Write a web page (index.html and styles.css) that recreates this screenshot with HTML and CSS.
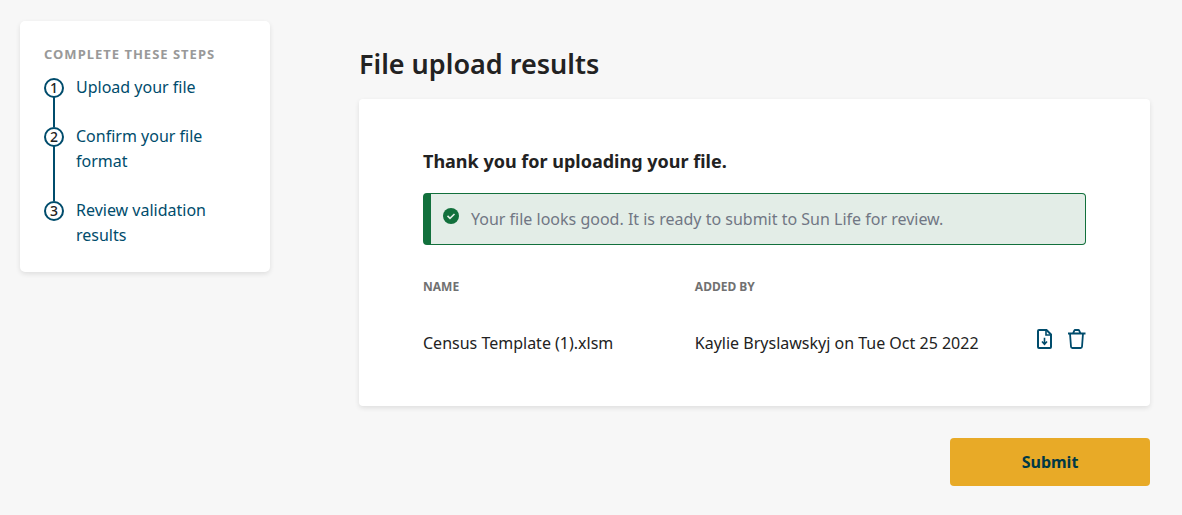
FILE: index.html
```html
<!DOCTYPE html>
<html lang="en">
<head>
  <meta charset="UTF-8">
  <meta name="viewport" content="width=device-width, initial-scale=1">
  <title>File upload results</title>
  <link rel="stylesheet" href="styles.css">
</head>
<body>

  <div class="page">
    <nav class="steps">
      <h2 class="steps-title">Complete these steps</h2>
      <ol class="steps-list">
        <li class="step"><span class="step-number">1</span><a href="#">Upload your file</a></li>
        <li class="step"><span class="step-number">2</span><a href="#">Confirm your file format</a></li>
        <li class="step"><span class="step-number">3</span><a href="#">Review validation results</a></li>
      </ol>
    </nav>

    <main class="content">
      <h1>File upload results</h1>

      <section class="card">
        <h2>Thank you for uploading your file.</h2>

        <div class="alert" role="status">
          <svg class="alert-icon" viewBox="0 0 16 16" width="16" height="16" aria-hidden="true">
            <circle cx="8" cy="8" r="8" fill="#12703c"/>
            <path d="M4.500 7.900l2.500 2.400 4.500-4.300" fill="none" stroke="#e3ede7" stroke-width="1.6"/>
          </svg>
          <p>Your file looks good. It is ready to submit to Sun Life for review.</p>
        </div>

        <table class="files">
          <thead>
            <tr>
              <th class="col-name" scope="col">Name</th>
              <th scope="col">Added by</th>
              <td class="col-actions"></td>
            </tr>
          </thead>
          <tbody>
            <tr>
              <td>Census Template (1).xlsm</td>
              <td>Kaylie Bryslawskyj on Tue Oct 25 2022</td>
              <td class="cell-actions">
                <div class="actions">
                  <button type="button" class="icon-btn" aria-label="Download file">
                    <svg viewBox="0 0 20 20" width="20" height="20">
                      <path d="M5 1h7.500L17 5.500V18a1 1 0 0 1-1 1H5a1 1 0 0 1-1-1V2a1 1 0 0 1 1-1z"/>
                      <path d="M12 1v5h5" stroke-width="1.6"/>
                      <path d="M10.500 8.800v6.200M8 12.500l2.500 2.700 2.500-2.700" stroke-width="1.6"/>
                    </svg>
                  </button>
                  <button type="button" class="icon-btn" aria-label="Delete file">
                    <svg viewBox="0 0 20 20" width="20" height="20">
                      <path d="M2 4.500h17.500M4 4.500l1 13.200a1.400 1.400 0 0 0 1.400 1.300h8.200a1.400 1.400 0 0 0 1.400-1.300l1-13.200M7 4.300l1.300-2.600a1 1 0 0 1 1-.7h2.900a1 1 0 0 1 1 .7l1.300 2.600" stroke-width="1.800"/>
                    </svg>
                  </button>
                </div>
              </td>
            </tr>
          </tbody>
        </table>
      </section>

      <button type="submit" class="submit-btn">Submit</button>
    </main>
  </div>

</body>
</html>
```
FILE: styles.css
```css
* {
  box-sizing: border-box;
}

body {
  margin: 0;
  font-family: "Noto Sans", "Open Sans", sans-serif;
  font-size: 16px;
  line-height: 25px;
  color: #222;
  background-color: #f7f7f7;
}

h1, h2, p, ol {
  margin: 0;
  padding: 0;
}

.page {
  display: grid;
  grid-template-columns: 250px 1fr;
  align-items: start;
  column-gap: 89px;
  padding: 21px 32px 29px 20px;
}

/* steps */

.steps {
  padding: 21px 24px 24px;
  background-color: #fff;
  border-radius: 5px;
  box-shadow: 0 2px 5px rgba(0, 0, 0, 0.1);
}

.steps-title {
  margin-bottom: 9px;
  font-size: 13px;
  line-height: 24px;
  letter-spacing: 1px;
  text-transform: uppercase;
  white-space: nowrap;
  color: #999;
}

.steps-list {
  display: grid;
  gap: 24px;
  list-style: none;
}

.step {
  position: relative;
  display: flex;
  gap: 12px;
}

/* line down to the next step */
.step:not(:last-child)::after {
  content: "";
  position: absolute;
  top: 22px;
  bottom: -27px;
  left: 9px;
  width: 2px;
  background-color: #004c6c;
}

.step-number {
  flex: none;
  width: 20px;
  height: 20px;
  margin-top: 3px;
  border: 2px solid #004c6c;
  border-radius: 50%;
  font-size: 14px;
  font-weight: 500;
  line-height: 16px;
  text-align: center;
}

.step a {
  color: #004c6c;
  text-decoration: none;
}

/* results */

.content {
  display: flex;
  flex-direction: column;
}

h1 {
  margin: 23px 0 15px;
  font-size: 27px;
  font-weight: 600;
  line-height: 40px;
}

.card {
  padding: 50px 64px;
  background-color: #fff;
  border-radius: 4px;
  box-shadow: 0 2px 5px rgba(0, 0, 0, 0.1);
}

.card h2 {
  margin-bottom: 19px;
  font-size: 18px;
}

.alert {
  display: flex;
  gap: 12px;
  padding: 13px 12px;
  border: 1px solid #12703c;
  border-left-width: 8px;
  border-radius: 4px;
  background-color: #e3ede7;
}

.alert-icon {
  flex: none;
  margin-top: 1px;
}

.alert p {
  line-height: 24px;
  color: #717784;
}

.files {
  width: 100%;
  margin-top: 29px;
  border-collapse: collapse;
  table-layout: fixed;
}

.files th,
.files td {
  padding: 0;
  text-align: left;
  vertical-align: top;
}

.files th {
  font-size: 12px;
  text-transform: uppercase;
  color: #717171;
}

.files tbody td {
  padding-top: 32px;
}

.files tbody .cell-actions {
  padding-top: 30px;
}

.col-name {
  width: 41%;
}

.col-actions {
  width: 52px;
}

.actions {
  display: flex;
  justify-content: flex-end;
  gap: 12px;
}

.icon-btn {
  display: block;
  height: 20px;
  padding: 0;
  border: none;
  background: none;
  cursor: pointer;
}

.icon-btn svg {
  display: block;
  fill: none;
  stroke: #004c6c;
  stroke-width: 2;
}

.submit-btn {
  align-self: flex-end;
  width: 200px;
  height: 48px;
  margin-top: 32px;
  border: none;
  border-radius: 4px;
  font-family: inherit;
  font-size: 16px;
  font-weight: 700;
  color: #003946;
  background-color: #e8aa27;
  cursor: pointer;
}

.submit-btn:hover {
  background-color: #d99b18;
}
```
